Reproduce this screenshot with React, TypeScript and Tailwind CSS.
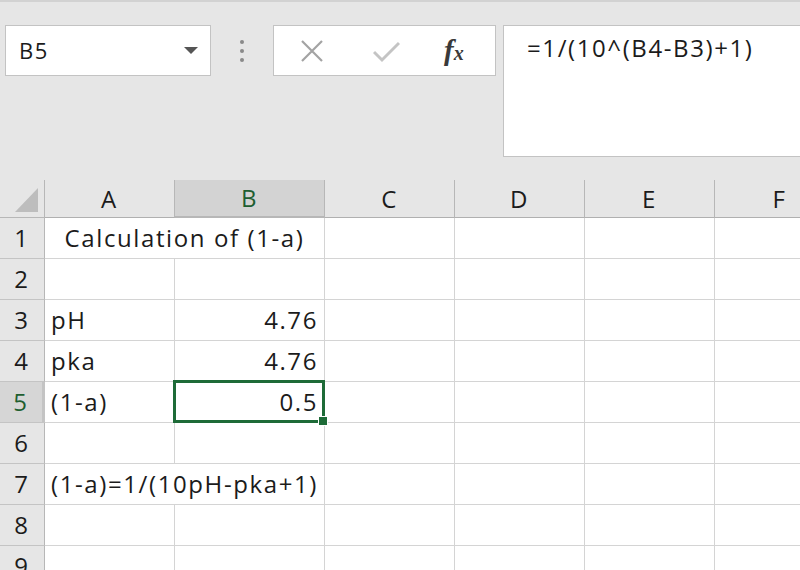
import type { ReactNode } from 'react'

type Cell = { text?: string; align?: 'left' | 'right' | 'center'; span?: boolean }

const COLUMNS = [
  { key: 'A', w: 'w-[130px]' },
  { key: 'B', w: 'w-[150px]' },
  { key: 'C', w: 'w-[130px]' },
  { key: 'D', w: 'w-[130px]' },
  { key: 'E', w: 'w-[130px]' },
  { key: 'F', w: 'w-[130px]' },
]

const ROWS: Cell[][] = [
  [{ text: 'Calculation of (1-a)', align: 'center', span: true }],
  [{}, {}],
  [{ text: 'pH' }, { text: '4.76', align: 'right' }],
  [{ text: 'pka' }, { text: '4.76', align: 'right' }],
  [{ text: '(1-a)' }, { text: '0.5', align: 'right' }],
  [{}, {}],
  [{ text: '(1-a)=1/(10pH-pka+1)', span: true }],
  [{}, {}],
  [{}, {}],
]

const GREEN = 'border-[#1e6b38]'

function NameBox() {
  return (
    <div className="w-[206px] h-[51px] bg-white border border-[#c3c3c3] flex items-center justify-between pl-[13px] pr-[12px]">
      <span className="text-[22px] text-[#1b1b1b]">B5</span>
      <svg width="14" height="8" viewBox="0 0 14 8">
        <polygon points="0,0 14,0 7,7" fill="#555" />
      </svg>
    </div>
  )
}

function Dots() {
  return (
    <div className="w-[62px] h-[51px] flex flex-col items-center justify-center gap-[5px]">
      <span className="w-[4px] h-[4px] rounded-full bg-[#8a8a8a]" />
      <span className="w-[4px] h-[4px] rounded-full bg-[#8a8a8a]" />
      <span className="w-[4px] h-[4px] rounded-full bg-[#8a8a8a]" />
    </div>
  )
}

function EditButtons() {
  return (
    <div className="w-[223px] h-[51px] bg-white border border-[#c3c3c3] flex items-center pl-[26px]">
      <svg width="24" height="22" viewBox="0 0 24 22">
        <path d="M2 1 L22 21 M22 1 L2 21" stroke="#a3a3a3" strokeWidth="2.2" fill="none" />
      </svg>
      <svg className="ml-[49px] mt-[2px]" width="27" height="22" viewBox="0 0 27 22">
        <path d="M1 11 L9 19 L26 2" stroke="#c4c4c4" strokeWidth="3" fill="none" />
      </svg>
      <span className="ml-[44px] tracking-normal font-['Liberation_Serif',serif] italic text-[#3a3a3a] text-[29px] leading-none font-bold">
        f<span className="text-[20px]">x</span>
      </span>
    </div>
  )
}

function HeaderCell({ label, w, active }: { label: string; w: string; active?: boolean }) {
  return (
    <div
      className={`${w} shrink-0 h-full flex items-center justify-center border-r border-[#b7b7b7] ${
        active ? `bg-[#d3d3d3] border-b-2 ${GREEN} text-[#1e5e30]` : 'border-b border-b-[#b0b0b0] text-[#1b1b1b]'
      }`}
    >
      {label}
    </div>
  )
}

function DataCell({ cell, w, selected }: { cell: Cell; w: string; selected?: boolean }) {
  const justify =
    cell.align === 'right' ? 'justify-end pr-[6px]' : cell.align === 'center' ? 'justify-center' : 'justify-start pl-[6px]'
  return (
    <div className={`${w} shrink-0 h-full relative flex items-center border-r border-b border-[#d4d4d4] whitespace-nowrap ${justify}`}>
      <span className="leading-none">{cell.text}</span>
      {selected && (
        <div className="absolute -left-[2px] -top-[2px] -right-[1px] -bottom-[1px] border-[3px] border-[#1e6b38] z-10">
          <div className="absolute -right-[6px] -bottom-[6px] w-[10px] h-[10px] bg-[#1e6b38] border border-white" />
        </div>
      )}
    </div>
  )
}

function Row({ n, cells }: { n: number; cells: Cell[] }) {
  const active = n === 5
  const out: ReactNode[] = []
  if (cells[0]?.span) {
    out.push(<DataCell key="AB" cell={cells[0]} w="w-[280px]" />)
  } else {
    out.push(<DataCell key="A" cell={cells[0]} w="w-[130px]" />)
    out.push(<DataCell key="B" cell={cells[1]} w="w-[150px]" selected={active} />)
  }
  for (const c of COLUMNS.slice(2)) out.push(<DataCell key={c.key} cell={{}} w={c.w} />)
  return (
    <div className="flex h-[41px] shrink-0">
      <div
        className={`w-[45px] shrink-0 h-full flex items-center justify-center border-b border-[#c4c4c4] ${
          active ? `bg-[#d6d6d6] border-r-[3px] ${GREEN} text-[#1e5e30]` : 'bg-[#e6e6e6] border-r border-r-[#b7b7b7]'
        }`}
      >
        <span className="leading-none">{n}</span>
      </div>
      {out}
    </div>
  )
}

export default function App() {
  return (
    <div className="w-[800px] h-[570px] overflow-hidden bg-white text-[24px] font-medium tracking-[1.6px] text-[#1b1b1b] font-['Open_Sans',sans-serif] flex flex-col">
      <div className="h-[180px] shrink-0 bg-[#e6e6e6] border-t-2 border-[#d2d2d2] flex items-start pt-[23px] pl-[5px]">
        <NameBox />
        <Dots />
        <EditButtons />
        <div className="ml-[7px] flex-1 h-[132px] bg-white border border-r-0 border-[#c3c3c3] pl-[23px] pt-[4px]">
          <span className="text-[24px] text-[#1b1b1b]">=1/(10^(B4-B3)+1)</span>
        </div>
      </div>

      <div className="flex h-[38px] shrink-0 bg-[#e6e6e6]">
        <div className="w-[45px] shrink-0 h-full border-r border-b border-[#b7b7b7]">
          <svg width="44" height="37" viewBox="0 0 44 37">
            <polygon points="38,8 38,32 15,32" fill="#bdbdbd" />
          </svg>
        </div>
        {COLUMNS.map(c => (
          <HeaderCell key={c.key} label={c.key} w={c.w} active={c.key === 'B'} />
        ))}
      </div>

      {ROWS.map((cells, i) => (
        <Row key={i} n={i + 1} cells={cells} />
      ))}
    </div>
  )
}
